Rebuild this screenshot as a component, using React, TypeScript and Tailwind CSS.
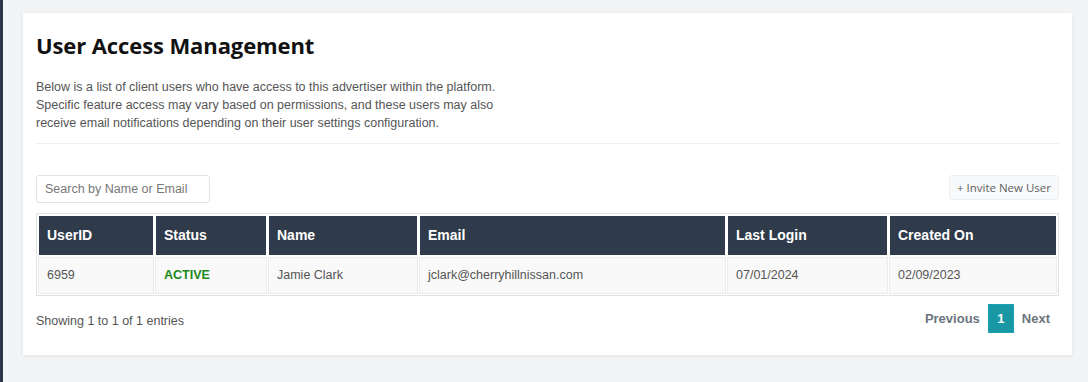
import React from 'react'

const headers = [
  { label: 'UserID', w: 'w-[116px]' },
  { label: 'Status', w: 'w-[112px]' },
  { label: 'Name', w: 'w-[150px]' },
  { label: 'Email', w: 'w-[307px]' },
  { label: 'Last Login', w: 'w-[161px]' },
  { label: 'Created On', w: '' },
]

const App: React.FC = () => {
  return (
    <div className="min-h-[382px] w-[1088px] bg-[#f3f4f5] flex font-['Liberation_Sans',Arial,sans-serif]">
      {/* left edge of sidebar */}
      <div className="w-[3px] bg-[#2d3748]" />

      <div className="flex-1 pl-[20px] pr-[16px] pt-[13px]">
        <div className="bg-white shadow-[0_1px_4px_rgba(0,0,0,0.08)] px-[13px] pt-[16px] pb-[22px]">
          {/* Header */}
          <h1 className="text-[22px] leading-[32px] font-bold text-[#111] font-['Open_Sans',sans-serif] tracking-[-0.1px]">
            User Access Management
          </h1>
          <p className="mt-[17px] text-[12.5px] leading-[18px] text-[#555]">
            Below is a list of client users who have access to this advertiser within the platform.
            <br />
            Specific feature access may vary based on permissions, and these users may also
            <br />
            receive email notifications depending on their user settings configuration.
          </p>
          <hr className="mt-[11px] border-t border-[#f0f0f0]" />

          {/* Toolbar */}
          <div className="mt-[31px] flex justify-between items-start">
            <input
              type="text"
              placeholder="Search by Name or Email"
              className="w-[174px] h-[28px] px-[8px] text-[12.5px] text-[#555] placeholder:text-[#777] border border-[#e3e3e3] rounded-[3px] outline-none"
            />
            <button className="h-[25px] px-[7px] text-[11.5px] text-[#5f5f5f] font-['Open_Sans',sans-serif] bg-[#f8f9fa] border border-[#eceeef] rounded-[3px]">
              + Invite New User
            </button>
          </div>

          {/* Table */}
          <div className="mt-[10px] border border-[#e2e2e2]">
            <table className="w-full table-fixed border-separate border-spacing-[1px] text-left">
              <thead>
                <tr>
                  {headers.map((h) => (
                    <th
                      key={h.label}
                      className={`${h.w} h-[41px] px-[8px] bg-[#2f3a4a] border border-white text-white text-[14px] font-bold`}
                    >
                      {h.label}
                    </th>
                  ))}
                </tr>
              </thead>
              <tbody>
                <tr className="text-[12.5px] text-[#555]">
                  <td className="h-[37px] px-[8px] bg-[#f9f9f9] border border-[#ececec]">6959</td>
                  <td className="px-[8px] bg-[#f9f9f9] border border-[#ececec] font-bold text-[#198a19]">ACTIVE</td>
                  <td className="px-[8px] bg-[#f9f9f9] border border-[#ececec]">Jamie Clark</td>
                  <td className="px-[8px] bg-[#f9f9f9] border border-[#ececec]">jclark@cherryhillnissan.com</td>
                  <td className="px-[8px] bg-[#f9f9f9] border border-[#ececec]">07/01/2024</td>
                  <td className="px-[8px] bg-[#f9f9f9] border border-[#ececec]">02/09/2023</td>
                </tr>
              </tbody>
            </table>
          </div>

          {/* Footer */}
          <div className="mt-[8px] flex justify-between items-start">
            <span className="mt-[8px] text-[12.5px] text-[#555]">Showing 1 to 1 of 1 entries</span>
            <div className="flex items-center text-[13px] font-bold text-[#6c757d] pr-[9px]">
              <span className="px-[8px]">Previous</span>
              <span className="w-[26px] h-[29px] flex items-center justify-center bg-[#1a97a5] border border-[#17a2b8] text-white">
                1
              </span>
              <span className="pl-[8px]">Next</span>
            </div>
          </div>
        </div>
      </div>
    </div>
  )
}

export default App
